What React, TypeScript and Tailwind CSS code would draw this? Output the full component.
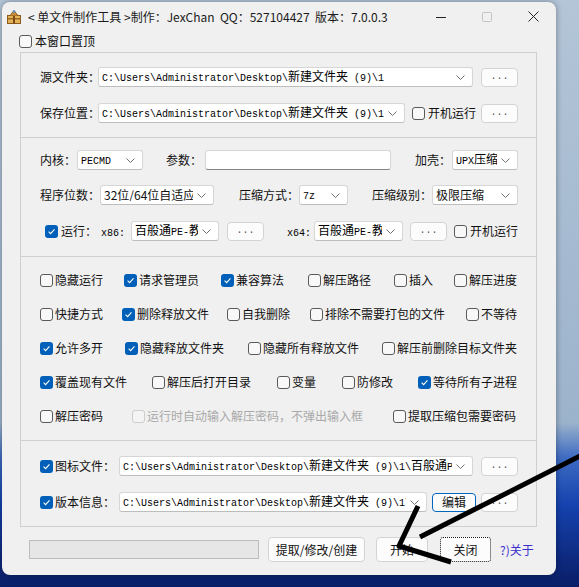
import React from "react"

const SANS = "font-['Noto_Sans_CJK_SC','Noto_Sans',sans-serif]"

// splits ascii / cjk runs so the path text reads like a 12px NSimSun line
function Mono({ text }: { text: string }) {
    const parts = text.match(/[\x00-\x7f]+|[^\x00-\x7f]+/g) ?? []
    return (
        <span className="whitespace-pre font-['Liberation_Mono','Noto_Sans_CJK_SC',monospace] text-[10px] leading-none text-black">
            {parts.map((p, i) =>
                /^[\x00-\x7f]/.test(p) ? (
                    <span key={i}>{p}</span>
                ) : (
                    <span key={i} className="font-['Noto_Sans_CJK_SC',sans-serif] text-[12px]">
                        {p}
                    </span>
                )
            )}
        </span>
    )
}

function Check({ on = false, dim = false }: { on?: boolean; dim?: boolean }) {
    if (on) {
        return (
            <span className="flex h-[13px] w-[13px] shrink-0 items-center justify-center rounded-[3px] bg-[#005fb8]">
                <svg width="9" height="9" viewBox="0 0 9 9">
                    <path d="M1.6 4.7L3.6 6.6L7.5 2.3" fill="none" stroke="white" strokeWidth="1.1" />
                </svg>
            </span>
        )
    }
    return (
        <span
            className={`h-[13px] w-[13px] shrink-0 rounded-[3px] border ${dim ? "border-[#cdcdcd] bg-[#f4f4f4]" : "border-[#5a5a5a] bg-[#f8f8f8]"
                }`}
        />
    )
}

function Opt({ label, on, dim, className = "" }: { label: string; on?: boolean; dim?: boolean; className?: string }) {
    return (
        <div className={`flex shrink-0 items-center gap-[2px] ${className}`}>
            <Check on={on} dim={dim} />
            <span className={`whitespace-nowrap ${dim ? "text-[#a9a9a9]" : ""}`}>{label}</span>
        </div>
    )
}

function Chevron() {
    return (
        <svg width="9" height="5" viewBox="0 0 9 5" className="shrink-0">
            <path d="M0.5 0.5L4.5 4.5L8.5 0.5" fill="none" stroke="#707070" strokeWidth="1" />
        </svg>
    )
}

function Combo({ className, children }: { className: string; children: React.ReactNode }) {
    return (
        <div
            className={`flex h-[20px] shrink-0 items-center gap-[4px] rounded-[3px] border border-[#d6d6d6] border-b-[#bdbdbd] bg-white pl-[3px] pr-[7px] ${className}`}
        >
            <div className="min-w-0 flex-1 overflow-hidden whitespace-nowrap leading-none">{children}</div>
            <Chevron />
        </div>
    )
}

function Dots({ className = "" }: { className?: string }) {
    return (
        <div
            className={`flex h-[19px] w-[37px] shrink-0 items-center justify-center rounded-[4px] border border-[#d3d3d3] bg-[#fcfcfc] font-['Liberation_Mono',monospace] text-[10px] leading-none text-[#555] ${className}`}
        >
            ...
        </div>
    )
}

function Label({ className, children }: { className: string; children: React.ReactNode }) {
    return <span className={`shrink-0 whitespace-nowrap leading-none ${className}`}>{children}</span>
}

function AppIcon() {
    return (
        <svg width="16" height="16" viewBox="0 0 16 16" className="shrink-0">
            <rect x="1.5" y="6.5" width="13" height="8" fill="#e2b457" stroke="#8b5a1c" />
            <rect x="1.5" y="9" width="13" height="1.5" fill="#9b6a2a" />
            <rect x="7" y="6.5" width="2" height="8" fill="#7c4c14" />
            <path d="M4 6.5L8 1.5L12 6.5" fill="#c98f3a" stroke="#7c4c14" strokeWidth="0.8" />
            <circle cx="8" cy="2.5" r="1.3" fill="#5a8fd0" />
        </svg>
    )
}

export default function App() {
    return (
        <div
            className={`relative h-[587px] w-[579px] overflow-hidden bg-[linear-gradient(180deg,#b3c5d7_0%,#9cb3cc_72%,#3d6bc2_78%,#1542ae_86%,#0a1d66_100%)] pl-[2px] pt-[2px] text-[12px] text-[#111] ${SANS}`}
        >
            {/* window */}
            <div className="flex h-[573px] w-[554px] flex-col rounded-[8px] bg-[#f0f0f0] shadow-[0_0_6px_rgba(0,0,0,0.35)]">
                {/* title bar */}
                <div className="flex h-[29px] shrink-0 items-center pl-[4px]">
                    <AppIcon />
                    <span className="ml-[6px] whitespace-pre leading-none text-[#1b1b1b]">
                        {"< 单文件制作工具 >制作：JexChan  QQ：527104427  版本：7.0.0.3"}
                    </span>
                    <div className="ml-auto flex h-full">
                        <div className="flex w-[46px] items-center justify-center">
                            <svg width="10" height="10" viewBox="0 0 10 10">
                                <path d="M0 5.5H10" stroke="#222" strokeWidth="1" />
                            </svg>
                        </div>
                        <div className="flex w-[46px] items-center justify-center">
                            <svg width="10" height="10" viewBox="0 0 10 10">
                                <rect x="0.5" y="0.5" width="9" height="9" rx="1" fill="none" stroke="#c4c4c4" />
                            </svg>
                        </div>
                        <div className="flex w-[46px] items-center justify-center">
                            <svg width="11" height="11" viewBox="0 0 11 11">
                                <path d="M0.5 0.5L10.5 10.5M10.5 0.5L0.5 10.5" stroke="#222" strokeWidth="1" />
                            </svg>
                        </div>
                    </div>
                </div>

                <div className="flex h-[20px] shrink-0 items-center gap-[3px] pl-[17px]">
                    <Check />
                    <span className="leading-none">本窗口置顶</span>
                </div>

                {/* main group */}
                <div className="ml-[18px] mt-[1px] flex w-[517px] shrink-0 flex-col border border-[#cfcfcf]">
                    {/* files */}
                    <div className="flex h-[85px] flex-col gap-[16px] border-b border-[#cfcfcf] pl-[19px] pt-[14px]">
                        <div className="flex h-[20px] items-center">
                            <Label className="w-[58px]">源文件夹：</Label>
                            <Combo className="w-[375px]">
                                <Mono text="C:\Users\Administrator\Desktop\新建文件夹 (9)\1" />
                            </Combo>
                            <Dots className="ml-[8px]" />
                        </div>
                        <div className="flex h-[20px] items-center">
                            <Label className="w-[58px]">保存位置：</Label>
                            <Combo className="w-[307px]">
                                <Mono text="C:\Users\Administrator\Desktop\新建文件夹 (9)\1.exe" />
                            </Combo>
                            <Opt label="开机运行" className="ml-[7px] w-[69px] gap-[3px]" />
                            <Dots />
                        </div>
                    </div>

                    {/* options */}
                    <div className="flex h-[119px] flex-col border-b border-[#cfcfcf] pl-[19px] pt-[12px]">
                        <div className="flex h-[20px] items-center">
                            <Label className="w-[37px]">内核：</Label>
                            <Combo className="w-[66px]">
                                <Mono text="PECMD" />
                            </Combo>
                            <Label className="ml-[23px] w-[39px]">参数：</Label>
                            <div className="h-[20px] w-[186px] shrink-0 rounded-[3px] border border-[#d6d6d6] border-b-[#858585] bg-white" />
                            <Label className="ml-[24px] w-[37px]">加壳：</Label>
                            <Combo className="w-[66px]">
                                <Mono text="UPX压缩" />
                            </Combo>
                        </div>
                        <div className="mt-[15px] flex h-[20px] items-center">
                            <Label className="w-[60px]">程序位数：</Label>
                            <Combo className="w-[114px]">
                                <span className="leading-none">32位/64位自适应</span>
                            </Combo>
                            <Label className="ml-[25px] w-[60px]">压缩方式：</Label>
                            <Combo className="w-[49px]">
                                <Mono text="7z" />
                            </Combo>
                            <Label className="ml-[24px] w-[60px]">压缩级别：</Label>
                            <Combo className="w-[86px]">
                                <span className="leading-none">极限压缩</span>
                            </Combo>
                        </div>
                        <div className="mt-[16px] flex h-[20px] items-center">
                            <Opt label="运行：" on className="ml-[5px] w-[56px] gap-[3px]" />
                            <span className="w-[30px] shrink-0">
                                <Mono text="x86:" />
                            </span>
                            <Combo className="w-[88px]">
                                <Mono text="百般通PE-教程" />
                            </Combo>
                            <Dots className="ml-[8px]" />
                            <span className="ml-[23px] w-[27px] shrink-0">
                                <Mono text="x64:" />
                            </span>
                            <Combo className="w-[89px]">
                                <Mono text="百般通PE-教程" />
                            </Combo>
                            <Dots className="ml-[7px]" />
                            <Opt label="开机运行" className="ml-[7px] gap-[3px]" />
                        </div>
                    </div>

                    {/* switches */}
                    <div className="flex h-[184px] flex-col gap-[14px] border-b border-[#cfcfcf] pl-[19px] pt-[13px]">
                        <div className="flex h-[20px] items-center">
                            <Opt label="隐藏运行" className="w-[84px]" />
                            <Opt label="请求管理员" on className="w-[97px]" />
                            <Opt label="兼容算法" on className="w-[87px]" />
                            <Opt label="解压路径" className="w-[86px]" />
                            <Opt label="插入" className="w-[60px]" />
                            <Opt label="解压进度" />
                        </div>
                        <div className="flex h-[20px] items-center">
                            <Opt label="快捷方式" className="w-[82px]" />
                            <Opt label="删除释放文件" on className="w-[105px]" />
                            <Opt label="自我删除" className="w-[83px]" />
                            <Opt label="排除不需要打包的文件" className="w-[156px]" />
                            <Opt label="不等待" />
                        </div>
                        <div className="flex h-[20px] items-center">
                            <Opt label="允许多开" on className="w-[85px]" />
                            <Opt label="隐藏释放文件夹" on className="w-[123px]" />
                            <Opt label="隐藏所有释放文件" className="w-[134px]" />
                            <Opt label="解压前删除目标文件夹" />
                        </div>
                        <div className="flex h-[20px] items-center">
                            <Opt label="覆盖现有文件" on className="w-[112px]" />
                            <Opt label="解压后打开目录" className="w-[125px]" />
                            <Opt label="变量" className="w-[65px]" />
                            <Opt label="防修改" className="w-[76px]" />
                            <Opt label="等待所有子进程" on />
                        </div>
                        <div className="flex h-[20px] items-center">
                            <Opt label="解压密码" className="w-[92px]" />
                            <Opt label="运行时自动输入解压密码，不弹出输入框" dim className="w-[261px]" />
                            <Opt label="提取压缩包需要密码" />
                        </div>
                    </div>

                    {/* resources */}
                    <div className="flex h-[85px] flex-col gap-[16px] pl-[19px] pt-[15px]">
                        <div className="flex h-[20px] items-center">
                            <Check on />
                            <Label className="ml-[2px] w-[64px]">图标文件：</Label>
                            <Combo className="w-[354px]">
                                <Mono text="C:\Users\Administrator\Desktop\新建文件夹 (9)\1\百般通PE-教程.ico" />
                            </Combo>
                            <Dots className="ml-[8px]" />
                        </div>
                        <div className="flex h-[20px] items-center">
                            <Check on />
                            <Label className="ml-[2px] w-[64px]">版本信息：</Label>
                            <Combo className="w-[308px]">
                                <Mono text="C:\Users\Administrator\Desktop\新建文件夹 (9)\1\百般通PE-教程.ini" />
                            </Combo>
                            <div className="ml-[5px] flex h-[19px] w-[44px] shrink-0 items-center justify-center rounded-[4px] border border-[#0067c0] bg-[#fcfcfc] leading-none">
                                编辑
                            </div>
                            <Dots className="ml-[5px]" />
                        </div>
                    </div>
                </div>

                {/* footer */}
                <div className="mt-[10px] flex h-[25px] shrink-0 items-center pl-[27px]">
                    <div className="h-[19px] w-[230px] shrink-0 border border-[#bcbcbc] bg-[#e6e6e6]" />
                    <div className="ml-[9px] flex h-[25px] w-[97px] shrink-0 items-center justify-center rounded-[4px] border border-[#d3d3d3] bg-[#fcfcfc] leading-none">
                        提取/修改/创建
                    </div>
                    <div className="ml-[11px] flex h-[25px] w-[52px] shrink-0 items-center justify-center rounded-[4px] border border-[#d3d3d3] bg-[#fcfcfc] leading-none">
                        开始
                    </div>
                    <div className="ml-[12px] flex h-[25px] w-[51px] shrink-0 items-center justify-center rounded-[3px] border border-dotted border-[#1a1a1a] bg-[#fcfcfc] leading-none">
                        关闭
                    </div>
                    <span className="ml-[9px] leading-none text-[#3a2fcc]">?)关于</span>
                </div>
            </div>

            {/* hand-drawn arrow on top of the screenshot */}
            <svg className="pointer-events-none absolute left-0 top-0" width="579" height="587" viewBox="0 0 579 587">
                <path d="M582 455L420 537" stroke="black" strokeWidth="5" fill="none" />
                <path d="M418 506L399 546L451 562" stroke="black" strokeWidth="5" fill="none" strokeLinejoin="round" />
            </svg>
        </div>
    )
}
